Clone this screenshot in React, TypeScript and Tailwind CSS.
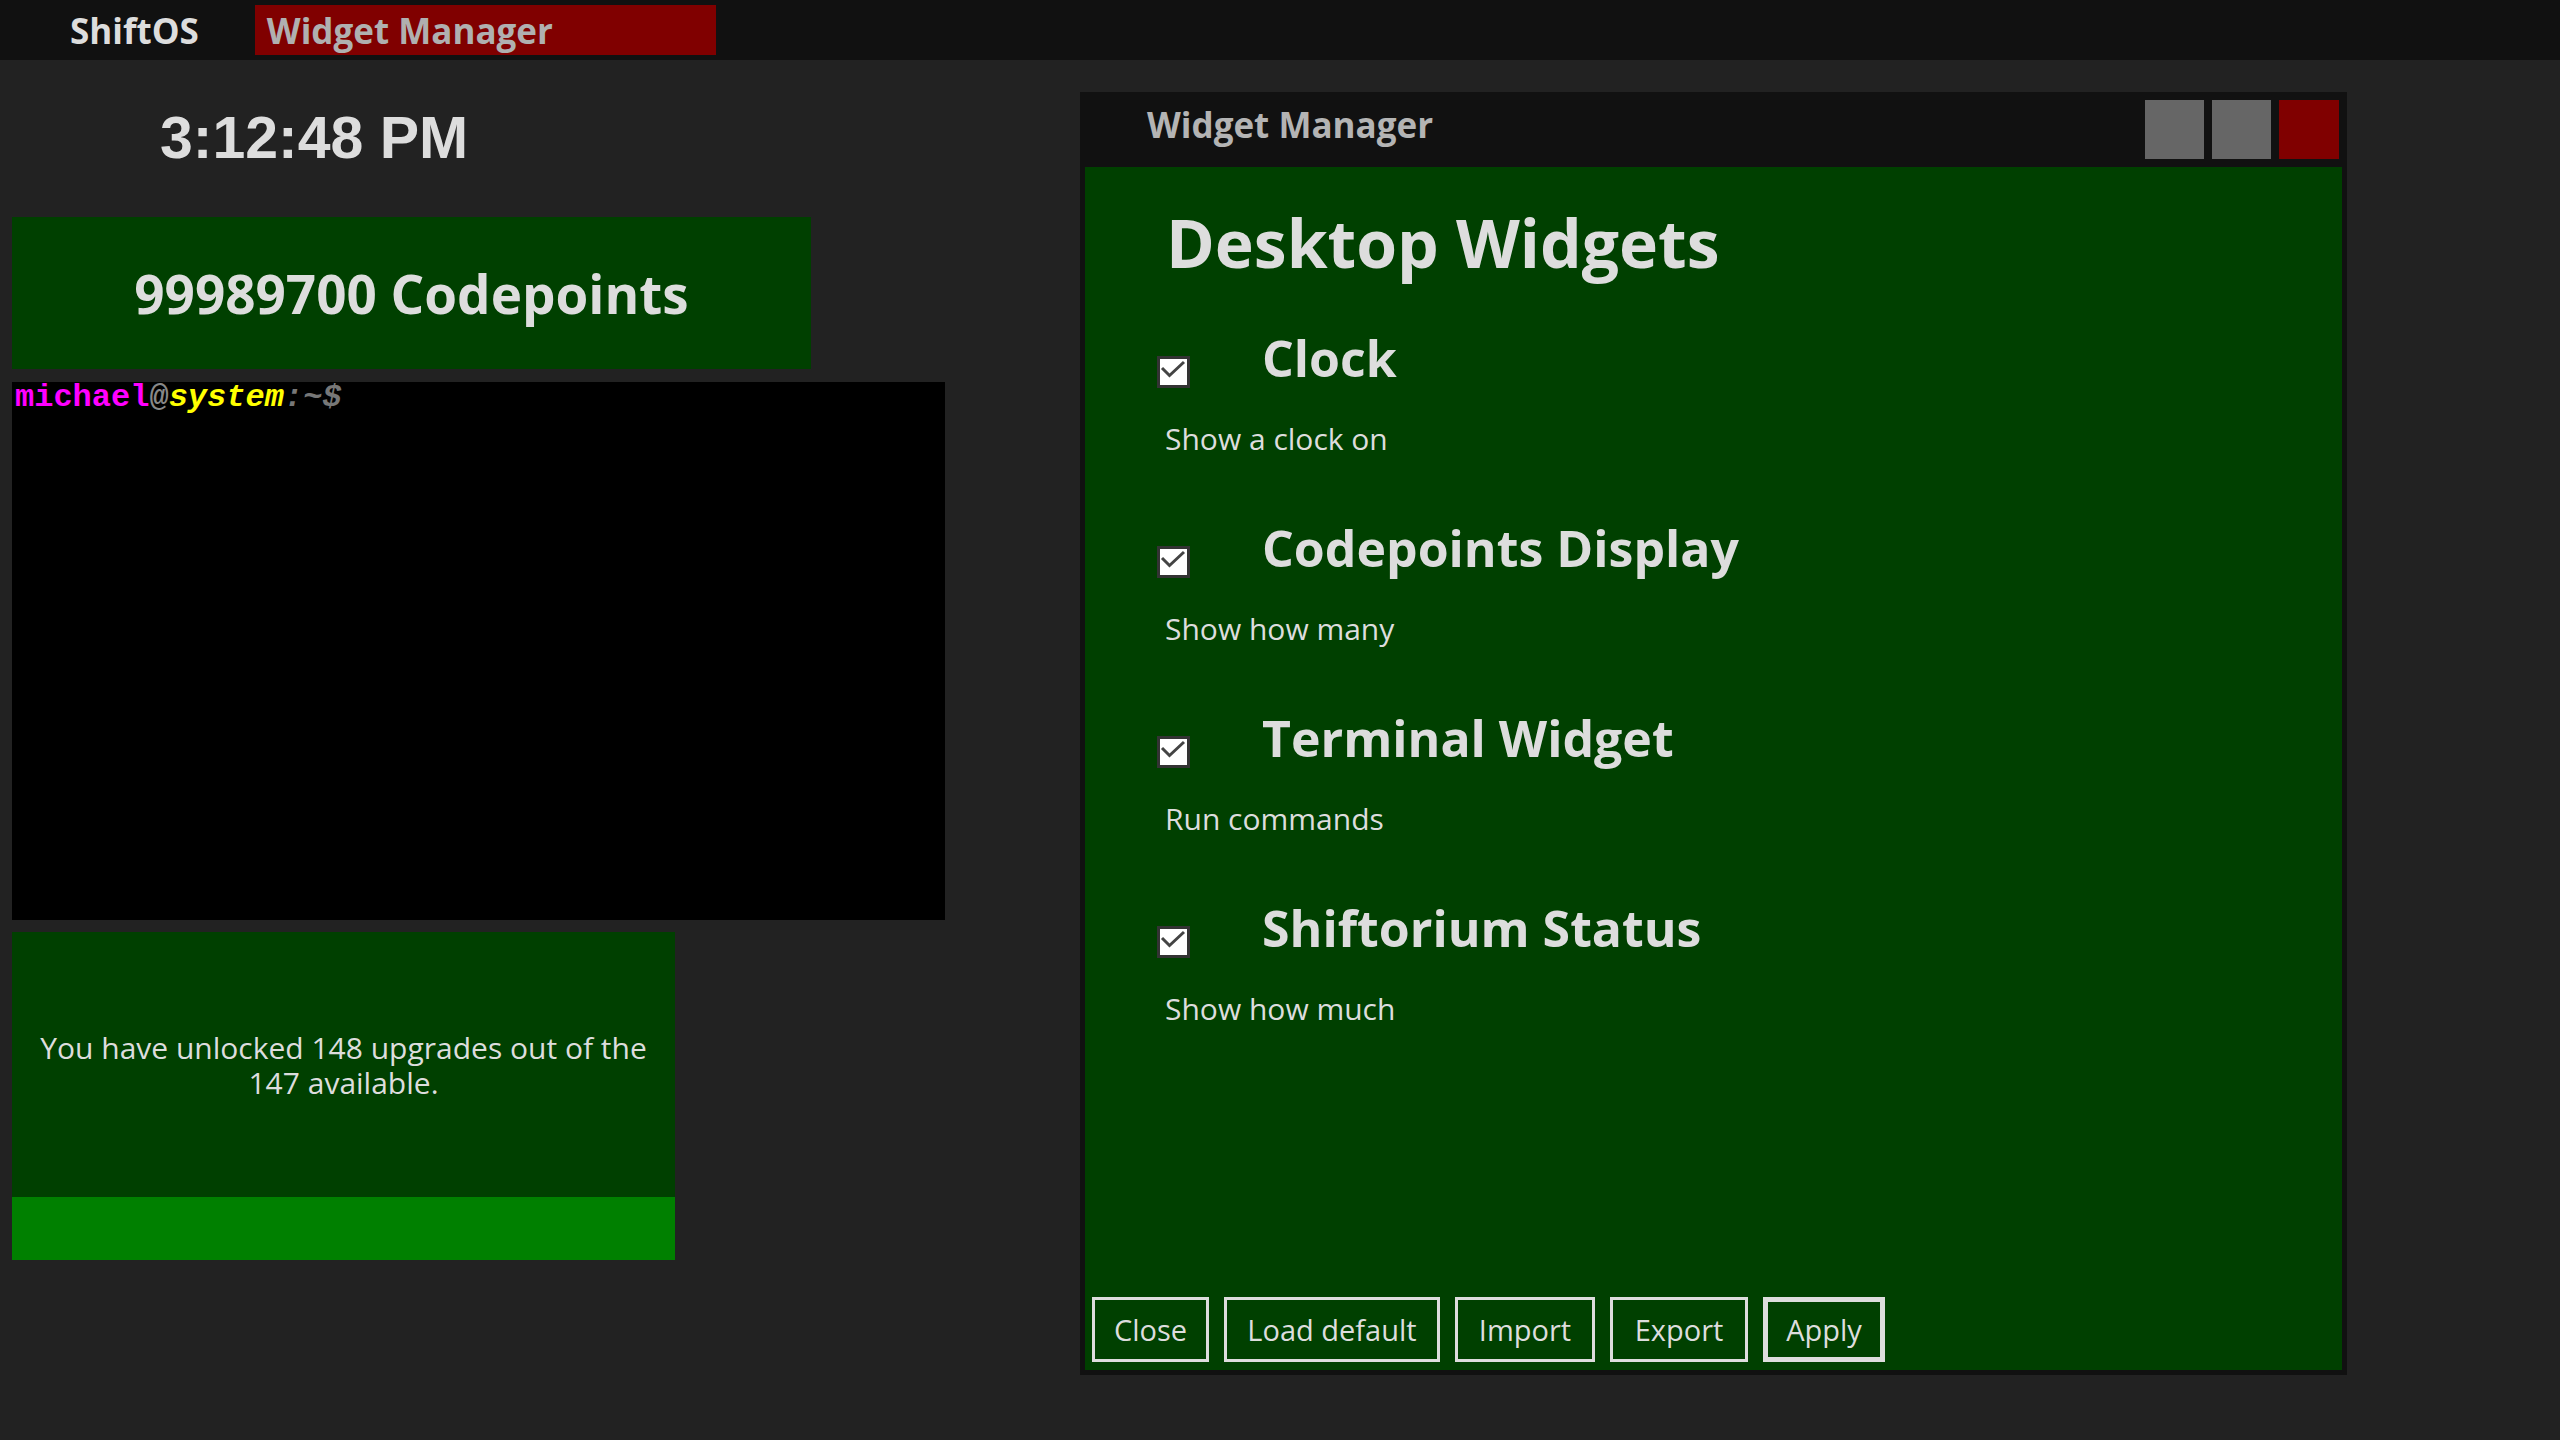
import React from "react";

const sans = "font-['Open_Sans','Noto_Sans',sans-serif]";

const widgets = [
  { name: "Clock", desc: "Show a clock on" },
  { name: "Codepoints Display", desc: "Show how many" },
  { name: "Terminal Widget", desc: "Run commands" },
  { name: "Shiftorium Status", desc: "Show how much" },
];

const buttons = [
  { label: "Close", w: "w-[117px]" },
  { label: "Load default", w: "w-[216px]" },
  { label: "Import", w: "w-[140px]" },
  { label: "Export", w: "w-[138px]" },
];

function CheckBox() {
  return (
    <div className="mt-[23px] w-[33px] h-[32px] shrink-0 border-[3px] border-[#333] bg-white">
      <svg viewBox="0 0 27 26" className="w-full h-full">
        <path d="M2 9 L9.5 16.5 L24 3" fill="none" stroke="#444" strokeWidth="3" />
      </svg>
    </div>
  );
}

export default function App() {
  return (
    <div className={`w-[2560px] h-[1440px] bg-[#222] flex flex-col overflow-hidden ${sans}`}>
      {/* taskbar */}
      <div className="h-[60px] bg-[#111] flex items-center pl-[70px]">
        <span className="text-[35px] leading-none font-bold text-[#ddd]">ShiftOS</span>
        <div className="ml-[56px] w-[461px] h-[50px] bg-[#800000] flex items-center pl-[12px]">
          <span className="text-[35px] leading-none font-bold text-[#b0b0b0]">Widget Manager</span>
        </div>
      </div>

      <div className="flex">
        {/* desktop widgets */}
        <div className="w-[945px] pl-[12px] flex flex-col">
          <div className="h-[157px] flex items-center pl-[148px]">
            <span className="font-['Liberation_Sans',Arial,sans-serif] font-bold text-[59px] leading-none text-[#ddd]">
              3:12:48 PM
            </span>
          </div>
          <div className="w-[799px] h-[152px] bg-[#004000] flex items-center justify-center">
            <span className="text-[53px] leading-none font-bold text-[#ddd]">99989700 Codepoints</span>
          </div>
          <div className="mt-[13px] w-[933px] h-[538px] bg-black pl-[3px] font-['Liberation_Mono',monospace] font-bold text-[32px] leading-none">
            <span className="text-[#ff00ff]">michael</span>
            <span className="text-[#888]">@</span>
            <span className="text-[#ffff00] italic">system</span>
            <span className="text-[#777] italic">:~$</span>
          </div>
          <div className="mt-[12px] w-[663px] flex flex-col">
            <div className="h-[265px] bg-[#004000] flex items-center justify-center px-[15px]">
              <p className="text-center text-[30px] leading-[35px] text-[#ddd]">
                You have unlocked 148 upgrades out of the 147 available.
              </p>
            </div>
            <div className="h-[63px] bg-[#008000]" />
          </div>
        </div>

        {/* widget manager window */}
        <div className="ml-[135px] mt-[32px] w-[1267px] h-[1283px] bg-[#111] flex flex-col px-[5px] pb-[5px]">
          <div className="h-[75px] shrink-0 flex items-center">
            <span className="ml-[62px] mb-[10px] text-[35px] leading-none font-bold text-[#b4b4b4]">Widget Manager</span>
            <div className="ml-auto mr-[3px] flex gap-[8px]">
              <div className="w-[59px] h-[59px] bg-[#666]" />
              <div className="w-[59px] h-[59px] bg-[#666]" />
              <div className="w-[60px] h-[59px] bg-[#800000]" />
            </div>
          </div>
          <div className="flex-1 bg-[#004000] flex flex-col text-[#ddd]">
            <h1 className="mt-[42px] ml-[81px] text-[66px] leading-none font-bold">Desktop Widgets</h1>
            <div className="mt-[58px] ml-[72px] flex flex-col gap-[69px]">
              {widgets.map((w) => (
                <div key={w.name}>
                  <div className="flex items-start">
                    <CheckBox />
                    <span className="ml-[72px] text-[50px] leading-none font-bold">{w.name}</span>
                  </div>
                  <p className="mt-[36px] ml-[8px] text-[30px] leading-none">{w.desc}</p>
                </div>
              ))}
            </div>
            <div className="mt-auto mb-[8px] ml-[7px] flex gap-[15px]">
              {buttons.map((b) => (
                <button
                  key={b.label}
                  className={`${b.w} h-[65px] border-[3px] border-[#ddd] text-[29px] leading-none text-[#ddd] flex items-center justify-center`}
                >
                  {b.label}
                </button>
              ))}
              <button className="w-[122px] h-[65px] border-[5px] border-[#ddd] text-[29px] leading-none text-[#ddd] flex items-center justify-center">
                Apply
              </button>
            </div>
          </div>
        </div>
      </div>
    </div>
  );
}
